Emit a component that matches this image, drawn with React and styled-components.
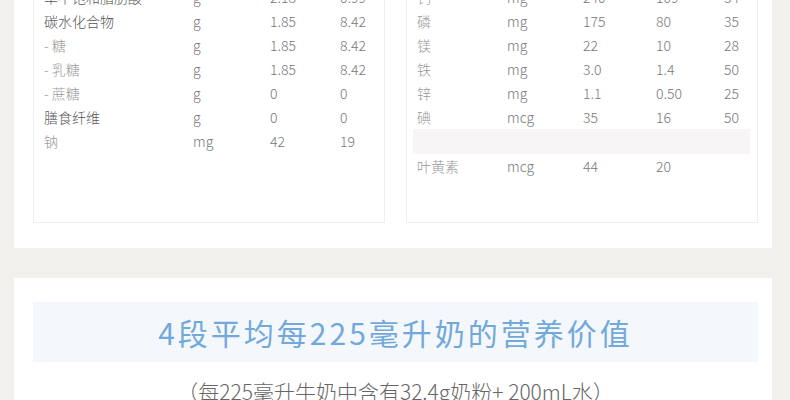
import React from "react";
import styled, { createGlobalStyle } from "styled-components";

const GlobalStyle = createGlobalStyle`
  html, body {
    margin: 0;
    padding: 0;
    background: #f1f0ec;
    overflow: hidden;
    font-family: "Noto Sans CJK SC", "Noto Sans", sans-serif;
  }
`;

/* the screenshot is taken part-way down the page, so the first card starts above the frame */
const Page = styled.div`
  width: 758px;
  margin: -66px 0 0 14px;
  display: flex;
  flex-direction: column;
  gap: 30px;
`;

const Card = styled.section`
  background: #fff;
  padding: ${(p) => p.$pad || "0"};
`;

const Tables = styled.div`
  display: grid;
  grid-template-columns: 352px 352px;
  gap: 21px;
`;

const Box = styled.div`
  border: 1px solid #efeeea;
  padding: 26px 7px 44px 6px;
  box-sizing: border-box;
`;

const Row = styled.div`
  display: grid;
  grid-template-columns: ${(p) => p.$cols};
  height: ${(p) => (p.$shade ? 25 : 24)}px;
  align-items: center;
  padding-left: 4px;
  background: ${(p) => (p.$shade ? "#f7f5f5" : "transparent")};
  font-size: 14px;
  font-weight: 300;
  color: #777;
  white-space: nowrap;
`;

const Name = styled.span`
  color: ${(p) => (p.$strong ? "#555" : "#999")};
`;

const Unit = styled.span`
  color: #777;
`;

const Title = styled.h2`
  margin: 0;
  height: 60px;
  background: #f4f8fc;
  display: flex;
  align-items: center;
  justify-content: center;
  font-size: 30px;
  font-weight: 400;
  letter-spacing: 3px;
  color: #72a9da;
`;

const Sub = styled.p`
  margin: 14px 0 0;
  text-align: center;
  font-size: 21px;
  font-weight: 300;
  color: #666;
`;

const leftCols = "149px 77px 70px 1fr";
const rightCols = "90px 76px 73px 68px 1fr";

const leftRows = [
  ["饱和脂肪酸", "g", "1.52", "0.69", true],
  ["单不饱和脂肪酸", "g", "2.18", "0.99", true],
  ["碳水化合物", "g", "1.85", "8.42", true],
  ["- 糖", "g", "1.85", "8.42"],
  ["- 乳糖", "g", "1.85", "8.42"],
  ["- 蔗糖", "g", "0", "0"],
  ["膳食纤维", "g", "0", "0", true],
  ["钠", "mg", "42", "19"],
];

const rightRows = [
  ["维生素C", "mg", "22", "10", "250"],
  ["钙", "mg", "240", "109", "34"],
  ["磷", "mg", "175", "80", "35"],
  ["镁", "mg", "22", "10", "28"],
  ["铁", "mg", "3.0", "1.4", "50"],
  ["锌", "mg", "1.1", "0.50", "25"],
  ["碘", "mcg", "35", "16", "50"],
];

export default function App() {
  return (
    <>
      <GlobalStyle />
      <Page>
        <Card $pad="0 14px 25px 19px">
          <Tables>
            <Box>
              {leftRows.map(([n, u, a, b, s]) => (
                <Row key={n} $cols={leftCols}>
                  <Name $strong={s}>{n}</Name>
                  <Unit>{u}</Unit>
                  <span>{a}</span>
                  <span>{b}</span>
                </Row>
              ))}
            </Box>
            <Box>
              {rightRows.map(([n, u, a, b, c]) => (
                <Row key={n} $cols={rightCols}>
                  <Name>{n}</Name>
                  <Unit>{u}</Unit>
                  <span>{a}</span>
                  <span>{b}</span>
                  <span>{c}</span>
                </Row>
              ))}
              <Row $cols={rightCols} $shade />
              <Row $cols={rightCols}>
                <Name>叶黄素</Name>
                <Unit>mcg</Unit>
                <span>44</span>
                <span>20</span>
                <span></span>
              </Row>
            </Box>
          </Tables>
        </Card>
        <Card $pad="24px 14px 40px 19px">
          <Title>4段平均每225毫升奶的营养价值</Title>
          <Sub>（每225毫升牛奶中含有32.4g奶粉+ 200mL水）</Sub>
        </Card>
      </Page>
    </>
  );
}
